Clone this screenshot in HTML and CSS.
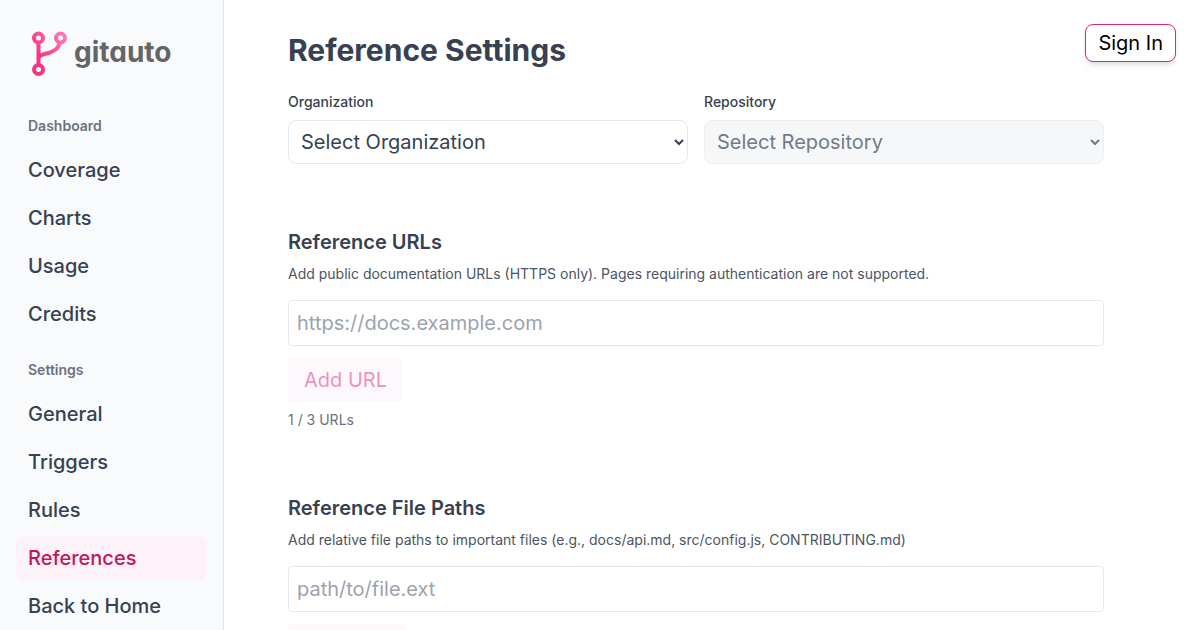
FILE: index.html
```html
<!DOCTYPE html>
<html lang="en">
<head>
<meta charset="utf-8">
<meta name="viewport" content="width=device-width, initial-scale=1">
<title>Reference Settings</title>
<link rel="stylesheet" href="styles.css">
</head>
<body>
<div class="shell">
  <aside class="sidebar">
    <a class="logo" href="#">
      <svg class="logo-mark" viewBox="0 0 36 46" fill="none" aria-hidden="true">
        <defs>
          <linearGradient id="pink" gradientUnits="userSpaceOnUse" x1="8" y1="26" x2="34" y2="6">
            <stop offset="0" stop-color="#f73585"/>
            <stop offset="1" stop-color="#ff7ab8"/>
          </linearGradient>
        </defs>
        <path d="M6.500 8v30M6.500 27c1-3 4-3.500 8-4.500 8-2 12.500-4.500 14-14" stroke="url(#pink)" stroke-width="4"/>
        <circle cx="6.500" cy="7" r="4.500" fill="#f9fafc" stroke="url(#pink)" stroke-width="4"/>
        <circle cx="28.500" cy="7" r="4.500" fill="#f9fafc" stroke="url(#pink)" stroke-width="4"/>
        <circle cx="6.500" cy="38.500" r="4.500" fill="#f9fafc" stroke="url(#pink)" stroke-width="4"/>
      </svg>
      <span class="logo-text">gitauto</span>
    </a>
    <nav class="nav">
      <h2 class="nav-title">Dashboard</h2>
      <ul class="nav-list">
        <li><a class="nav-link" href="#">Coverage</a></li>
        <li><a class="nav-link" href="#">Charts</a></li>
        <li><a class="nav-link" href="#">Usage</a></li>
        <li><a class="nav-link" href="#">Credits</a></li>
      </ul>
      <h2 class="nav-title">Settings</h2>
      <ul class="nav-list">
        <li><a class="nav-link" href="#">General</a></li>
        <li><a class="nav-link" href="#">Triggers</a></li>
        <li><a class="nav-link" href="#">Rules</a></li>
        <li><a class="nav-link active" href="#" aria-current="page">References</a></li>
        <li><a class="nav-link" href="#">Back to Home</a></li>
      </ul>
    </nav>
  </aside>
  <main class="main">
    <h1 class="title">Reference Settings</h1>
    <div class="selectors">
      <div class="field">
        <label class="label" for="org">Organization</label>
        <select class="select" id="org"><option>Select Organization</option></select>
      </div>
      <div class="field">
        <label class="label" for="repo">Repository</label>
        <select class="select" id="repo" disabled><option>Select Repository</option></select>
      </div>
    </div>
    <section class="section">
      <h2 class="heading"><label for="url">Reference URLs</label></h2>
      <p class="description">Add public documentation URLs (HTTPS only). Pages requiring authentication are not supported.</p>
      <input class="input" id="url" type="url" placeholder="https://docs.example.com">
      <button class="add" type="button" disabled>Add URL</button>
      <p class="count">1 / 3 URLs</p>
    </section>
    <section class="section">
      <h2 class="heading"><label for="path">Reference File Paths</label></h2>
      <p class="description">Add relative file paths to important files (e.g., docs/api.md, src/config.js, CONTRIBUTING.md)</p>
      <input class="input" id="path" type="text" placeholder="path/to/file.ext">
      <button class="add" type="button" disabled>Add Path</button>
    </section>
  </main>
  <button class="sign-in" type="button">Sign In</button>
</div>
</body>
</html>
```
FILE: styles.css
```css
*, *::before, *::after { box-sizing: border-box; }
body, h1, h2, p, ul { margin: 0; padding: 0; }
body {
  background: #fff;
  color: #374151;
  font-family: Inter, "Liberation Sans", sans-serif;
  font-size: 20px;
  line-height: 28px;
}
button, input, select { font: inherit; margin: 0; }
a { color: inherit; text-decoration: none; }
ul { list-style: none; }

.shell { position: relative; display: flex; height: 100vh; }
.sidebar {
  flex: 0 0 224px;
  padding: 24px 16px;
  background: #f9fafc;
  border-right: 1px solid #e5e7eb;
  overflow-y: auto;
  scrollbar-width: none;
}
.logo { display: flex; align-items: center; height: 60px; margin-bottom: 32px; padding-left: 16px; gap: 6px; }
.logo-mark { width: 36px; height: 46px; }
.logo-text {
  padding-bottom: 4px;
  color: #666564;
  font-size: 28px;
  font-weight: 700;
  font-feature-settings: "cv11";
}
.nav-title {
  padding: 0 12px;
  margin-bottom: 12px;
  color: #6b7280;
  font-size: 14px;
  line-height: 20px;
  font-weight: 600;
}
.nav-list { display: flex; flex-direction: column; gap: 4px; margin-bottom: 24px; }
.nav-link { display: block; padding: 8px 12px; border-radius: 8px; font-weight: 500; }
.nav-link.active { background: #fdf2f8; color: #be185d; }

.main {
  flex: 1;
  padding: 32px 96px 32px 64px;
  overflow-y: auto;
  scrollbar-width: none;
}
.title { margin-bottom: 24px; font-size: 30px; line-height: 36px; font-weight: 700; }
.selectors { display: grid; grid-template-columns: 1fr 1fr; gap: 16px; margin-bottom: 64px; }
.field { display: flex; flex-direction: column; gap: 8px; }
.label { font-size: 14px; line-height: 20px; font-weight: 500; }
.select {
  width: 100%;
  height: 44px;
  padding: 0 8px;
  border: 1px solid #e5e7eb;
  border-radius: 8px;
  background: #fff;
  color: #374151;
}
.select:disabled { background: #f3f4f6; opacity: 0.7; }
.section { display: flex; flex-direction: column; align-items: flex-start; margin-bottom: 64px; }
.heading { margin-bottom: 8px; font-size: 20px; line-height: 28px; font-weight: 600; }
.description { margin-bottom: 16px; color: #4b5563; font-size: 14px; line-height: 20px; }
.input {
  width: 100%;
  margin-bottom: 12px;
  padding: 8px;
  border: 1px solid #e5e7eb;
  border-radius: 4px;
  background: #fff;
  color: #374151;
}
.input::placeholder { color: #9ca3af; }
.add { margin-bottom: 8px; padding: 8px 16px; border: 0; border-radius: 4px; background: #fdf2f8; color: #db2777; opacity: 0.5; }
.count { color: #6b7280; font-size: 14px; line-height: 20px; }
.sign-in {
  position: absolute;
  top: 24px;
  right: 24px;
  padding: 4px 12px;
  border: 1px solid #db2777;
  border-radius: 8px;
  background: #fff;
  color: #000;
  box-shadow: 0 4px 6px -1px rgb(0 0 0 / 0.1), 0 2px 4px -2px rgb(0 0 0 / 0.1);
}
```
